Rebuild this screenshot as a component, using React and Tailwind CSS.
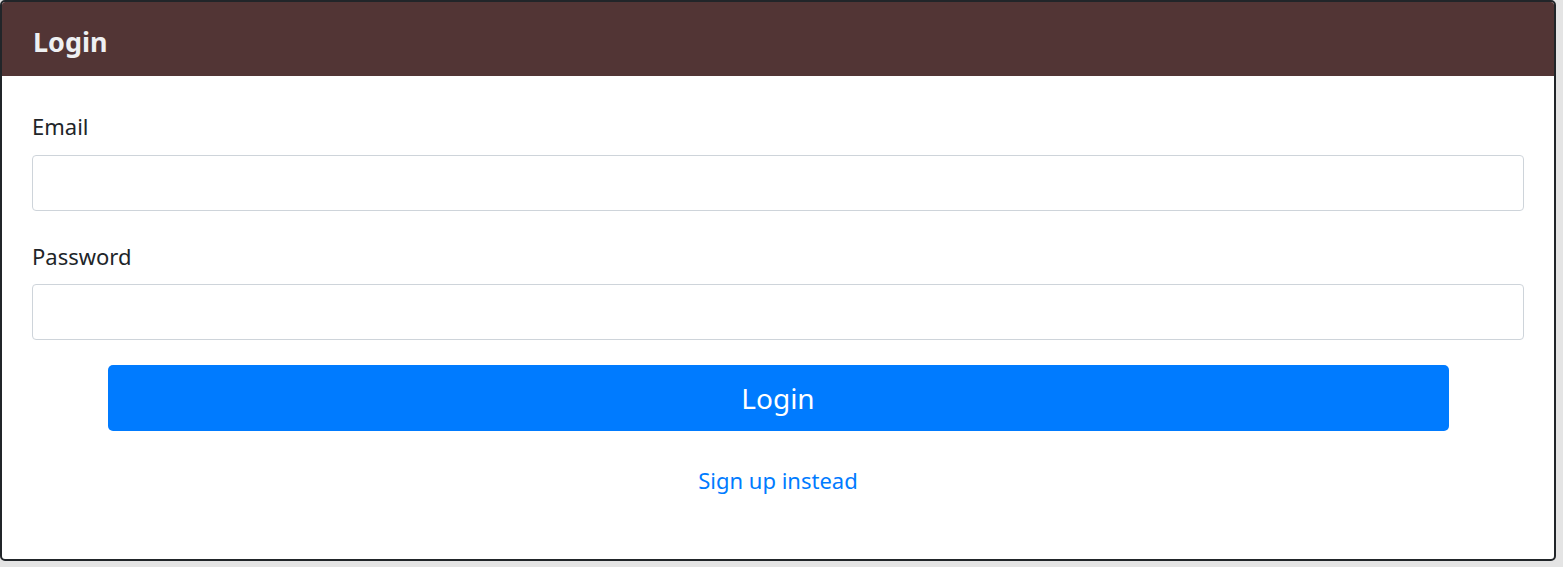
export default function App() {
  return (
    <div
      className="min-h-screen bg-[#e4e4e4]"
      style={{ fontFamily: '"Noto Sans", "Open Sans", sans-serif' }}
    >
      <div className="w-[1556px] border-2 border-[#212529] rounded-[5px] bg-white overflow-hidden">
        <div className="h-[74px] bg-[#523535] px-[31px] pt-[4px] flex items-center">
          <h5 className="text-[27px] font-bold text-[#eef0f2] leading-none">Login</h5>
        </div>
        <div className="px-[30px] pt-[35px] pb-[64px]">
          <div className="mb-[30px]">
            <label className="block text-[22px] leading-[30px] text-[#212529] mb-[14px]">Email</label>
            <input
              type="email"
              className="block w-full h-[56px] border border-[#ced4da] rounded-[4px] bg-white outline-none"
            />
          </div>
          <div className="mb-[25px]">
            <label className="block text-[22px] leading-[30px] text-[#212529] mb-[13px]">Password</label>
            <input
              type="password"
              className="block w-full h-[56px] border border-[#ced4da] rounded-[4px] bg-white outline-none"
            />
          </div>
          <button className="block mx-auto w-[1341px] h-[66px] bg-[#007bff] rounded-[5px] text-white text-[28px] leading-none">
            Login
          </button>
          <div className="mt-[34px] h-[30px] flex justify-center items-center">
            <a href="#" className="text-[#007bff] text-[22px] leading-[30px]">Sign up instead</a>
          </div>
        </div>
      </div>
    </div>
  );
}
